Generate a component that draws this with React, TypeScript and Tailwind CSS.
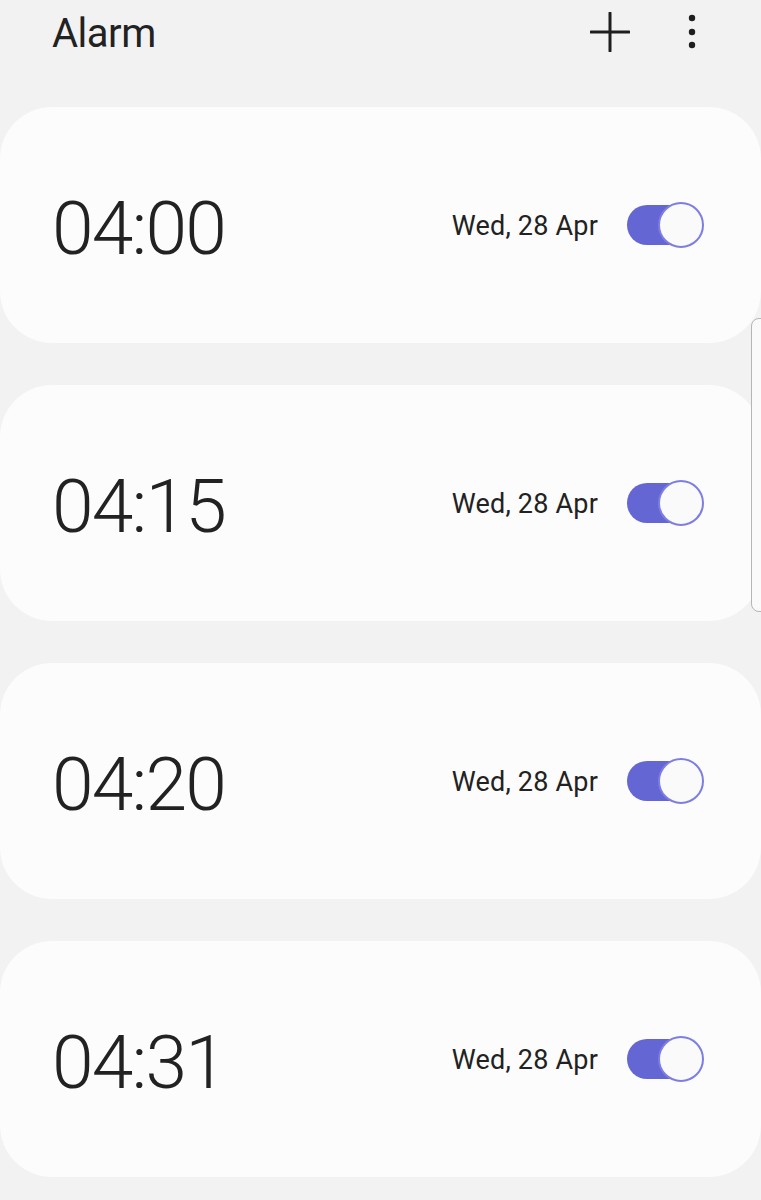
import React from "react";

const alarms = ["04:00", "04:15", "04:20", "04:31"];

function Toggle() {
  return (
    <div className="relative w-[77px] h-[46px] shrink-0">
      <div className="absolute left-0 top-[3px] w-[62px] h-[40px] rounded-full bg-[#6466d3]" />
      <div className="absolute right-0 top-0 w-[46px] h-[46px] rounded-full border-2 border-[#7d7ee3] bg-[#fafafa]" />
    </div>
  );
}

export default function App() {
  return (
    <div className="relative w-[761px] h-[1200px] overflow-hidden bg-[#f2f2f2] text-[#222222] font-['Roboto',sans-serif]">
      <div className="flex items-center h-[64px] pl-[52px] pr-[65px] mb-[43px]">
        <div className="text-[40px] leading-none tracking-[-0.5px] font-normal pt-[3px]">Alarm</div>
        <div className="flex-1" />
        <svg width="40" height="40" viewBox="0 0 40 40" className="mr-[58px]">
          <path d="M20 1 V39 M1 20 H39" stroke="#1e1e1e" strokeWidth="3" strokeLinecap="round" />
        </svg>
        <svg width="8" height="36" viewBox="0 0 8 36">
          <circle cx="4" cy="4" r="3.2" fill="#1e1e1e" />
          <circle cx="4" cy="18" r="3.2" fill="#1e1e1e" />
          <circle cx="4" cy="31" r="3.2" fill="#1e1e1e" />
        </svg>
      </div>
      <div className="flex flex-col gap-[42px]">
        {alarms.map((t) => (
          <div
            key={t}
            className="flex items-center h-[236px] rounded-[52px] bg-[#fcfcfc] pl-[52px] pr-[57px]"
          >
            <div className="text-[75px] leading-none font-light tracking-[-1.8px] pt-[6px]">{t}</div>
            <div className="flex-1" />
            <div className="text-[27px] leading-none mr-[29px] pt-[3px] tracking-[0.2px]">Wed, 28 Apr</div>
            <Toggle />
          </div>
        ))}
      </div>
      <div className="absolute left-[751px] top-[318px] w-[16px] h-[294px] rounded-l-[8px] border border-[#b5b5b5] bg-[#fafafa]" />
    </div>
  );
}
